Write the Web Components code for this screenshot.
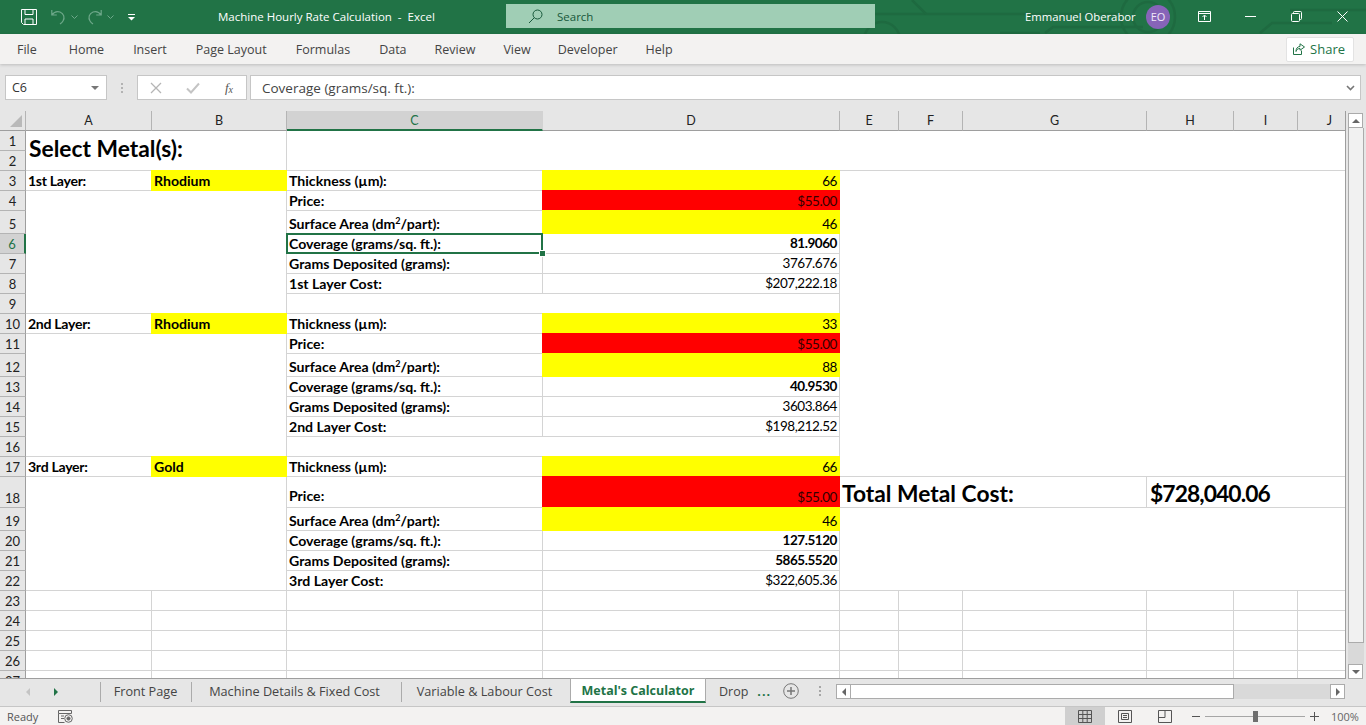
<!DOCTYPE html>
<html>
<head>
<meta charset="utf-8">
<title>Machine Hourly Rate Calculation - Excel</title>
<style>
  html, body { margin: 0; height: 100%; overflow: hidden; background: #e6e6e6; }
</style>
</head>
<body>
<xl-app>
  <xl-titlebar title-text="Machine Hourly Rate Calculation  -  Excel" user="Emmanuel Oberabor" initials="EO"></xl-titlebar>
  <xl-ribbon-tabs>
    <span>File</span><span>Home</span><span>Insert</span><span>Page Layout</span><span>Formulas</span><span>Data</span><span>Review</span><span>View</span><span>Developer</span><span>Help</span>
  </xl-ribbon-tabs>
  <xl-formula-bar cell="C6" formula="Coverage (grams/sq. ft.):"></xl-formula-bar>
  <xl-sheet></xl-sheet>
  <xl-sheet-tabs>
    <xl-tab style="width:91px;padding-right:1px">Front Page</xl-tab>
    <xl-tab style="width:210px;padding-right:4px">Machine Details &amp; Fixed Cost</xl-tab>
    <xl-tab style="width:169px;padding-right:3px">Variable &amp; Labour Cost</xl-tab>
    <xl-tab active style="width:136px">Metal's Calculator</xl-tab>
  </xl-sheet-tabs>
  <xl-status-bar></xl-status-bar>
</xl-app>

<script>
const UI_FONT = '"Open Sans", "Noto Sans", sans-serif';
const CELL_FONT = 'Lato, "Liberation Sans", sans-serif';

class XlApp extends HTMLElement {
  constructor() {
    super();
    this.attachShadow({ mode: 'open' });
    this.shadowRoot.innerHTML = `
      <style>
        :host { display: flex; flex-direction: column; width: 1366px; height: 725px; overflow: hidden; font-family: ${UI_FONT}; }
      </style>
      <slot></slot>`;
  }
}

class XlTitlebar extends HTMLElement {
  constructor() {
    super();
    this.attachShadow({ mode: 'open' });
  }

  connectedCallback() {
    const title = this.getAttribute('title-text');
    const user = this.getAttribute('user');
    const initials = this.getAttribute('initials');
    this.shadowRoot.innerHTML = `
      <style>
        :host { display: block; position: relative; height: 34px; flex: none; background: #217346; color: #fff; font-size: 11.5px; overflow: hidden; }
        .pattern { position: absolute; left: 0; top: 0; }
        .bar { position: relative; display: grid; height: 100%; align-items: center;
               grid-template-columns: 218px 288px 369px 150px 121px 35px 46px 46px 46px 47px; }
        .qat { display: flex; align-items: center; padding-left: 21px; }
        .qat svg { display: block; }
        .title { white-space: pre; margin-top: -1px; }
        .search { height: 24px; margin-top: -2px; background: #a0ceb5; color: #17583a; display: flex; align-items: center; padding-left: 22px; gap: 14px; }
        .user { white-space: nowrap; margin-top: -1px; font-size: 11.3px; }
        .avatar { width: 24px; height: 24px; margin-top: -1px; border-radius: 50%; background: #8764b8; font-size: 11px; display: flex; align-items: center; justify-content: center; color: #f1e9f8; }
        .win { display: flex; justify-content: center; margin-top: -2px; }
      </style>
      <svg class="pattern" width="1366" height="34" fill="none" stroke="#1e6a40" stroke-width="2.5">
        <path d="M875 14H1120M1000 33H1040M1045 33l8-6h90"/>
        <circle cx="882" cy="40" r="18"/>
        <circle cx="1148" cy="17" r="27"/>
        <path d="M1260 33l12-10h60M1290 10h76M912 0l14 14"/>
        <circle cx="1148" cy="17" r="15" stroke="#1e6a40"/>
      </svg>
      <div class="bar">
        <div class="qat">
          <svg width="16" height="16" viewBox="0 0 16 16" fill="none" stroke="#fff" stroke-width="1">
            <path d="M.5.5h15v15H2.5l-2-2z"/><path d="M4 .5v5h8v-5M4 15.5v-5.5h8v5.500"/>
          </svg>
          <svg style="margin-left:14px" width="15" height="16" viewBox="0 0 15 16" fill="none" stroke="#6ea88a" stroke-width="1.2">
            <path d="M.8 1v5h5M1 6c2-3 5-4 8-3 4 1.500 5 6 3 9-.6 1-1.500 2-3 3"/>
          </svg>
          <svg style="margin-left:5px" width="7" height="4" viewBox="0 0 7 4" fill="none" stroke="#6ea88a"><path d="M.5.500l3 3 3-3"/></svg>
          <svg style="margin-left:9px" width="15" height="16" viewBox="0 0 15 16" fill="none" stroke="#6ea88a" stroke-width="1.2">
            <path d="M14.200 1v5h-5M14 6c-2-3-5-4-8-3C2 4.500 1 9 3 12c.6 1 1.500 2 3 3"/>
          </svg>
          <svg style="margin-left:5px" width="7" height="4" viewBox="0 0 7 4" fill="none" stroke="#6ea88a"><path d="M.5.500l3 3 3-3"/></svg>
          <svg style="margin-left:14px" width="8" height="7" viewBox="0 0 8 7" fill="#fff"><rect width="7" height="1"/><path d="M0 3h7L3.500 6.500z"/></svg>
        </div>
        <div class="title">${title}</div>
        <div class="search">
          <svg width="15" height="15" viewBox="0 0 15 15" fill="none" stroke="#17583a" stroke-width="1"><circle cx="9.500" cy="5.500" r="4.500"/><path d="M6.300 8.700L1 14"/></svg>
          <span>Search</span>
        </div>
        <div></div>
        <div class="user">${user}</div>
        <div class="avatar">${initials}</div>
        <div class="win"><svg width="13" height="11" viewBox="0 0 13 11" fill="none" stroke="#fff"><path d="M.5.500h12v10H.5zM.5 2.500h12M6.500 9V4.500M4.500 6l2-2 2 2"/></svg></div>
        <div class="win"><svg width="11" height="1"><rect width="11" height="1" fill="#fff"/></svg></div>
        <div class="win"><svg width="11" height="11" viewBox="0 0 11 11" fill="none" stroke="#fff"><rect x=".5" y="2.500" width="8" height="8" rx="1"/><path d="M2.500 2.500V1.500a1 1 0 0 1 1-1h6a1 1 0 0 1 1 1v6a1 1 0 0 1-1 1h-1"/></svg></div>
        <div class="win"><svg width="11" height="11" viewBox="0 0 11 11" stroke="#fff" fill="none"><path d="M.5.500l10 10M10.500.500l-10 10"/></svg></div>
      </div>`;
  }
}

class XlRibbonTabs extends HTMLElement {
  constructor() {
    super();
    this.attachShadow({ mode: 'open' });
    this.shadowRoot.innerHTML = `
      <style>
        :host { display: flex; align-items: center; justify-content: space-between; height: 30px; flex: none; position: relative;
                background: #f3f2f1; box-shadow: 0 1px 3px rgba(0,0,0,.18); font-size: 12.5px; color: #444; z-index: 1; }
        .tabs { display: flex; gap: 29px; padding-left: 17px; }
        ::slotted(span:first-child) { margin-right: 3px; }
        ::slotted(span:nth-child(7)), ::slotted(span:nth-child(8)), ::slotted(span:nth-child(10)) { margin-left: -1px; }
        ::slotted(span:nth-child(9)) { margin-left: -2px; }
        .share { display: flex; align-items: center; gap: 5px; height: 23px; margin-right: 12px; padding: 0 8px 0 6px;
                 background: #fff; border: 1px solid #e3e3e3; border-radius: 2px; color: #217346; font-size: 13px; }
      </style>
      <div class="tabs"><slot></slot></div>
      <div class="share">
        <svg width="12" height="12" viewBox="0 0 12 12" fill="none" stroke="#217346"><path d="M.5 4.500v7h8V7.500M7 .8l4.500 3.200L7 7.200V5.500c-2 0-3.500 1-4 3 0-3 1.500-5 4-5z"/></svg>
        <span>Share</span>
      </div>`;
  }
}

class XlFormulaBar extends HTMLElement {
  constructor() {
    super();
    this.attachShadow({ mode: 'open' });
  }

  connectedCallback() {
    this.shadowRoot.innerHTML = `
      <style>
        :host { display: flex; align-items: center; height: 47px; flex: none; box-sizing: border-box; padding: 11px 5px 11px; background: #e6e6e6; font-size: 13.5px; color: #444; }
        .box { height: 25px; box-sizing: border-box; background: #fff; border: 1px solid #c6c6c6; display: flex; align-items: center; }
        .name { width: 102px; padding: 0 7px 0 6px; justify-content: space-between; color: #333; font-size: 12.5px; }
        .caret { width: 0; height: 0; border: 4px solid transparent; border-top: 4px solid #777; border-bottom: 0; }
        .dots { width: 30px; text-align: center; display: flex; flex-direction: column; align-items: center; gap: 2px; }
        .dots i { width: 2px; height: 2px; background: #b3b3b3; }
        .fns { width: 110px; justify-content: space-between; padding: 0 13px 0 12px; margin-right: 3px; }
        .fns span { font: italic 13px "Liberation Serif", serif; color: #555; }
        .formula { flex: 1; padding: 0 5px 0 11px; justify-content: space-between; color: #444; }
      </style>
      <div class="box name"><span>${this.getAttribute('cell')}</span><i class="caret"></i></div>
      <div class="dots"><i></i><i></i><i></i></div>
      <div class="box fns">
        <svg width="12" height="12" viewBox="0 0 12 12" stroke="#b5b5b5" stroke-width="1.300" fill="none"><path d="M1 1l10 10M11 1L1 11"/></svg>
        <svg width="14" height="12" viewBox="0 0 14 12" stroke="#c4c4c4" stroke-width="2" fill="none"><path d="M1 6.500l4 4 8-9"/></svg>
        <span>f<sub style="font-size:10px;vertical-align:-1px">x</sub></span>
      </div>
      <div class="box formula"><span>${this.getAttribute('formula')}</span>
        <svg width="9" height="6" viewBox="0 0 9 6" stroke="#777" stroke-width="1.600" fill="none"><path d="M1 1l3.500 3.500L8 1"/></svg>
      </div>`;
  }
}

// grid tracks, measured from the reference (J runs on under the scrollbar)
const COLS = [['A', 126], ['B', 135], ['C', 256], ['D', 297], ['E', 59], ['F', 64], ['G', 184], ['H', 87], ['I', 64], ['J', 64]];
const ROWS = [20, 20, 20, 20, 23, 20, 20, 20, 20, 20, 20, 23, 20, 20, 20, 20, 20, 31, 23, 20, 20, 20, 20, 20, 20, 20, 20];

const LAYERS = [
  { row: 3, name: '1st', metal: 'Rhodium', thick: '66', area: '46', cov: '81.9060', grams: '3767.676', cost: '$207,222.18' },
  { row: 10, name: '2nd', metal: 'Rhodium', thick: '33', area: '88', cov: '40.9530', grams: '3603.864', cost: '$198,212.52' },
  { row: 17, name: '3rd', metal: 'Gold', thick: '66', area: '46', cov: '127.5120', grams: '5865.5520', cost: '$322,605.36', boldGrams: true }
];

class XlSheet extends HTMLElement {
  constructor() {
    super();
    this.attachShadow({ mode: 'open' });
  }

  // c1/c2 are 1-based sheet columns, r1/r2 sheet rows (both inclusive)
  cell(c1, r1, c2, r2, text, cls) {
    const area = `grid-area:${r1 + 1}/${c1 + 1}/${r2 + 2}/${c2 + 2}`;
    return `<div class="c ${cls || ''}" style="${area}"><span>${text || ''}</span></div>`;
  }

  buildCells() {
    let out = '';
    out += this.cell(1, 1, 2, 2, 'Select Metal(s):', 'title');
    out += this.cell(3, 1, 10, 2);
    out += this.cell(5, 3, 10, 17);
    out += this.cell(5, 18, 7, 18, 'Total Metal Cost:', 'total');
    out += this.cell(8, 18, 10, 18, '$728,040.06', 'total amount');
    out += this.cell(5, 19, 10, 22);

    LAYERS.forEach((l) => {
      const r = l.row;
      const lastBlank = r === 17 ? 22 : r + 6;
      const tall = r === 17;
      out += this.cell(1, r, 1, r, `${l.name} Layer:`, 'b lbl');
      out += this.cell(2, r, 2, r, l.metal, 'b yellow');
      out += this.cell(1, r + 1, 2, lastBlank);
      out += this.cell(3, r, 3, r, 'Thickness (µm):', 'b');
      out += this.cell(4, r, 4, r, l.thick, 'r yellow');
      out += this.cell(3, r + 1, 3, r + 1, 'Price:', tall ? 'b tall' : 'b');
      out += this.cell(4, r + 1, 4, r + 1, '$55.00', tall ? 'r red tall2' : 'r red');
      out += this.cell(3, r + 2, 3, r + 2, 'Surface Area (dm<sup>2</sup>/part):', 'b');
      out += this.cell(4, r + 2, 4, r + 2, l.area, 'r yellow');
      out += this.cell(3, r + 3, 3, r + 3, 'Coverage (grams/sq. ft.):', r === 3 ? 'b selected' : 'b');
      out += this.cell(4, r + 3, 4, r + 3, l.cov, 'r b');
      out += this.cell(3, r + 4, 3, r + 4, 'Grams Deposited (grams):', 'b');
      out += this.cell(4, r + 4, 4, r + 4, l.grams, l.boldGrams ? 'r b' : 'r');
      out += this.cell(3, r + 5, 3, r + 5, `${l.name} Layer Cost:`, 'b');
      out += this.cell(4, r + 5, 4, r + 5, l.cost, 'r');
      if (r !== 17) out += this.cell(3, r + 6, 4, r + 6);
    });

    for (let r = 23; r <= 27; r++) {
      COLS.forEach((_, i) => { out += this.cell(i + 1, r, i + 1, r); });
    }
    return out;
  }

  connectedCallback() {
    const colHeads = COLS.map(([n], i) =>
      `<div class="ch ${n === 'C' ? 'on' : ''}" style="grid-area:1/${i + 2}">${n}</div>`).join('');
    const rowHeads = ROWS.map((_, i) =>
      `<div class="rh ${i === 5 ? 'on' : ''}" style="grid-area:${i + 2}/1">${i + 1}</div>`).join('');

    this.shadowRoot.innerHTML = `
      <style>
        :host { display: flex; flex: 1; min-height: 0; background: #e6e6e6; font-family: ${CELL_FONT}; font-size: 14.1px; color: #000; }
        .view { width: 1345px; overflow: hidden; box-sizing: content-box; border-right: 1px solid #9e9e9e; border-bottom: 1px solid #9e9e9e; }
        .grid { display: grid; grid-template-columns: 26px ${COLS.map((c) => c[1] + 'px').join(' ')};
                grid-template-rows: 20px ${ROWS.map((h) => h + 'px').join(' ')}; }
        .corner { grid-area: 1/1; background: #e6e6e6; border-bottom: 1px solid #9e9e9e; border-right: 1px solid #b4b4b4; box-sizing: border-box; position: relative; }
        .corner::after { content: ""; position: absolute; right: 3px; bottom: 3px; border-style: solid; border-width: 0 0 12px 12px; border-color: transparent transparent #b9b9b9 transparent; }
        .ch { background: #e6e6e6; border-right: 1px solid #b4b4b4; border-bottom: 1px solid #9e9e9e; box-sizing: border-box; text-align: center; line-height: 19px; font-size: 12.500px; color: #222; }
        .ch.on { background: #d2d2d2; color: #217346; border-bottom: 2px solid #217346; border-right-color: #d2d2d2; }
        .rh { background: #e6e6e6; border-right: 1px solid #9e9e9e; border-bottom: 1px solid #b4b4b4; box-sizing: border-box; display: flex; align-items: flex-end; justify-content: center; line-height: 18px; font-size: 13px; color: #222; }
        .rh.on { background: #d2d2d2; color: #217346; border-right: 2px solid #217346; }
        .c { background: #fff; border-right: 1px solid #d4d4d4; border-bottom: 1px solid #d4d4d4; box-sizing: border-box;
             display: flex; align-items: flex-end; padding: 0 2px 1px 2px; line-height: 17px; white-space: nowrap; position: relative; min-width: 0; }
        .b { font-weight: 700; }
        .lbl { letter-spacing: -.3px; }
        .r { justify-content: flex-end; font-size: 13.500px; letter-spacing: -.45px; }
        .yellow, .red { margin: -1px 0 0 -1px; border-right: 0; border-bottom: 0; padding-left: 3px; padding-bottom: 2px; }
        .yellow { background: #ff0; }
        .red { background: #f00; color: #300; }
        .r.yellow, .r.red { padding-right: 3px; padding-bottom: 1px; }
        .c.tall { padding-bottom: 3px; }
        .r.red.tall2 { padding-bottom: 2px; }
        .title { font-size: 22.8px; font-weight: 700; align-items: flex-start; padding: 2px 0 0 3px; line-height: 30px; }
        .total { font-size: 22.8px; font-weight: 700; padding: 0 0 0 2px; line-height: 28px; }
        .amount { letter-spacing: -.9px; padding-left: 3px; }
        sup { font-size: 9px; line-height: 0; vertical-align: 5px; }
        .selected::after { content: ""; position: absolute; left: -1px; top: -1px; right: -1px; bottom: -1px; border: 2px solid #217346; }
        .selected::before { content: ""; position: absolute; right: -3px; bottom: -3px; width: 5px; height: 5px; background: #217346; outline: 1px solid #fff; z-index: 2; }
        .selected { z-index: 1; }
        .scroll { width: 18px; flex: none; display: flex; flex-direction: column; padding: 2px 2px 0 0; box-sizing: border-box; }
        .btn { width: 15px; height: 15px; box-sizing: border-box; background: #fff; border: 1px solid #ababab; display: flex; align-items: center; justify-content: center; flex: none; }
        .up { width: 0; height: 0; border: 4px solid transparent; border-bottom: 4px solid #666; border-top: 0; }
        .dn { width: 0; height: 0; border: 4px solid transparent; border-top: 4px solid #666; border-bottom: 0; }
        .thumb { height: 515px; box-sizing: border-box; background: #f1f1f1; border: 1px solid #ababab; border-top: 0; flex: none; }
        .track { flex: 1; background: #d9d9d9; }
        .gap { width: 2px; flex: none; }
      </style>
      <div class="view">
        <div class="grid">
          <div class="corner"></div>
          ${colHeads}${rowHeads}${this.buildCells()}
        </div>
      </div>
      <div class="gap"></div>
      <div class="scroll">
        <div class="btn"><i class="up"></i></div>
        <div class="thumb"></div>
        <div class="track"></div>
        <div class="btn"><i class="dn"></i></div>
      </div>`;
  }
}

class XlTab extends HTMLElement {
  constructor() {
    super();
    this.attachShadow({ mode: 'open' });
    this.shadowRoot.innerHTML = `
      <style>
        :host { display: flex; align-items: center; justify-content: center; box-sizing: border-box; height: 20px; margin-top: 3px; padding-bottom: 2px; white-space: nowrap; border-right: 1px solid #ababab; font-size: 12.700px; color: #444; flex: none; }
        :host([active]) { height: 25px; margin-top: -1px; padding-bottom: 0; background: #fff; color: #217346; font-weight: 700; font-size: 12.500px; border: 1px solid #ababab; border-bottom: 2px solid #217346; margin-left: -1px; }
      </style>
      <slot></slot>`;
  }
}

class XlSheetTabs extends HTMLElement {
  constructor() {
    super();
    this.attachShadow({ mode: 'open' });
    this.shadowRoot.innerHTML = `
      <style>
        :host { display: flex; height: 28px; flex: none; box-sizing: border-box; background: #e6e6e6; border-bottom: 1px solid #c6c6c6; font-size: 12.500px; color: #444; }
        .nav { width: 101px; flex: none; box-sizing: border-box; display: flex; align-items: center; gap: 24px; padding: 0 0 0 26px; border-right: 1px solid #ababab; height: 20px; margin-top: 3px; }
        .l { width: 0; height: 0; border: 4px solid transparent; border-right: 4px solid #c4c4c4; border-left: 0; }
        .r { width: 0; height: 0; border: 4px solid transparent; border-left: 4px solid #217346; border-right: 0; }
        .list { display: flex; align-items: flex-start; flex: none; }
        .more { display: flex; align-items: center; height: 24px; flex: none; padding-left: 13px; }
        .ell { color: #217346; font-weight: 700; margin-left: 9px; letter-spacing: 1px; }
        .plus { margin-left: 12px; display: block; }
        .dots { display: flex; flex-direction: column; gap: 2px; margin: 0 15px 0 20px; }
        .dots i { width: 2px; height: 2px; background: #a6a6a6; }
        .hs { display: flex; align-items: center; height: 15px; margin-top: 5px; flex: 1; margin-right: 21px; }
        .btn { width: 15px; height: 15px; box-sizing: border-box; background: #fff; border: 1px solid #ababab; display: flex; align-items: center; justify-content: center; flex: none; }
        .sl { width: 0; height: 0; border: 4px solid transparent; border-right: 4px solid #666; border-left: 0; }
        .sr { width: 0; height: 0; border: 4px solid transparent; border-left: 4px solid #666; border-right: 0; }
        .thumb { width: 383px; height: 15px; box-sizing: border-box; background: #fff; border: 1px solid #ababab; border-left: 0; flex: none; }
        .track { flex: 1; height: 15px; background: #d9d9d9; }
      </style>
      <div class="nav"><i class="l"></i><i class="r"></i></div>
      <div class="list"><slot></slot></div>
      <div class="more">
        <span>Drop</span><span class="ell">...</span>
        <svg class="plus" width="16" height="16" viewBox="0 0 16 16" fill="none" stroke="#777"><circle cx="8" cy="8" r="7.300"/><path d="M8 4v8M4 8h8" stroke-width="1.500"/></svg>
        <div class="dots"><i></i><i></i><i></i></div>
      </div>
      <div class="hs">
        <div class="btn"><i class="sl"></i></div>
        <div class="thumb"></div>
        <div class="track"></div>
        <div class="btn"><i class="sr"></i></div>
      </div>`;
  }
}

class XlStatusBar extends HTMLElement {
  constructor() {
    super();
    this.attachShadow({ mode: 'open' });
    this.shadowRoot.innerHTML = `
      <style>
        :host { display: flex; align-items: center; flex: none; height: 18px; background: #f3f2f1; font-size: 11px; color: #555; }
        .ready { margin-left: 7px; width: 51px; }
        .spacer { flex: 1; }
        .view { width: 40px; height: 100%; display: flex; align-items: center; justify-content: center; }
        .view.on { background: #cfcfcf; }
        .zoom { display: flex; align-items: center; margin-left: 7px; }
        .track { width: 100px; height: 1px; background: #a6a6a6; margin: 0 5px; position: relative; }
        .track i { position: absolute; left: 48px; top: -5px; width: 5px; height: 11px; background: #6f6f6f; }
        .pct { width: 35px; margin-left: 12px; color: #666; }
      </style>
      <span class="ready">Ready</span>
      <svg width="15" height="13" viewBox="0 0 15 13" fill="none" stroke="#666"><path d="M.5.500h13v3h-13zM.5 3.500v9h6M3 6h3M3 8.500h3"/><circle cx="10.500" cy="8.500" r="3.800"/><circle cx="10.500" cy="8.500" r="1.600" fill="#666"/></svg>
      <span class="spacer"></span>
      <div class="view on"><svg width="14" height="13" viewBox="0 0 14 13" fill="none" stroke="#555"><path d="M.5.500h13v12H.5zM.5 4.500h13M.5 8.500h13M4.800.5v12M9.200.5v12"/></svg></div>
      <div class="view"><svg width="14" height="13" viewBox="0 0 14 13" fill="none" stroke="#555"><path d="M.5.500h13v12H.5zM3.500 3.500h7v6h-7zM5 5.500h4M5 7.500h4"/></svg></div>
      <div class="view"><svg width="14" height="13" viewBox="0 0 14 13" fill="none" stroke="#555"><path d="M.5.500h13v12H.5zM.5 7.500h6.500V.5"/></svg></div>
      <div class="zoom">
        <svg width="8" height="1"><rect width="8" height="1" fill="#555"/></svg>
        <div class="track"><i></i></div>
        <svg width="9" height="9" viewBox="0 0 9 9" stroke="#555"><path d="M4.500 0v9M0 4.500h9"/></svg>
      </div>
      <span class="pct">100%</span>`;
  }
}

customElements.define('xl-app', XlApp);
customElements.define('xl-titlebar', XlTitlebar);
customElements.define('xl-ribbon-tabs', XlRibbonTabs);
customElements.define('xl-formula-bar', XlFormulaBar);
customElements.define('xl-sheet', XlSheet);
customElements.define('xl-tab', XlTab);
customElements.define('xl-sheet-tabs', XlSheetTabs);
customElements.define('xl-status-bar', XlStatusBar);
</script>
</body>
</html>
